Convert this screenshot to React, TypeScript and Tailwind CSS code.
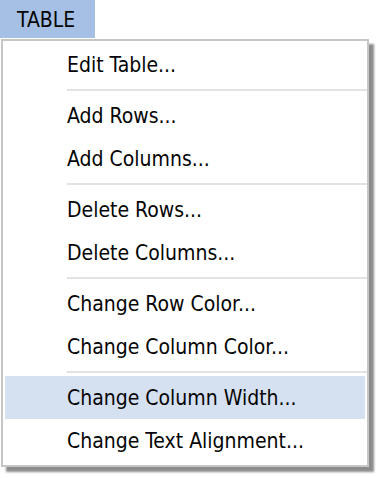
// App.tsx
// ─── TABLE MENU ─────────────────────────────────────────────

type Entry = { label: string; active?: boolean } | "sep";

const ENTRIES: Entry[] = [
  { label: "Edit Table..." },
  "sep",
  { label: "Add Rows..." },
  { label: "Add Columns..." },
  "sep",
  { label: "Delete Rows..." },
  { label: "Delete Columns..." },
  "sep",
  { label: "Change Row Color..." },
  { label: "Change Column Color..." },
  "sep",
  { label: "Change Column Width...", active: true },
  { label: "Change Text Alignment..." },
];

export default function App() {
  return (
    <div
      className="w-[382px] h-[478px] bg-white text-[21px] text-[#050505]"
      style={{ fontFamily: '"DejaVu Sans Condensed", "Liberation Sans", sans-serif' }}
    >
      {/* Menu bar button */}
      <div className="w-[95px] h-[38px] bg-[#a6bfe4] pl-[17px] flex items-center pt-[3px] leading-none">
        TABLE
      </div>

      {/* Dropdown */}
      <div className="ml-px mt-px w-[368px] border-2 border-[#c6c6c6] bg-white pt-[2px] pb-[3px] shadow-[5px_5px_2px_rgba(0,0,0,0.45)]">
        {ENTRIES.map((e, i) =>
          e === "sep" ? (
            <div key={i} className="h-[8px] pt-[3px] pl-[64px]">
              <div className="h-[2px] bg-[#e1e1e6]" />
            </div>
          ) : (
            <div
              key={i}
              className={`h-[43px] mx-[2px] pl-[62px] flex items-center leading-none pt-[2px] ${
                e.active ? "bg-[#d5e0f1]" : ""
              }`}
            >
              {e.label}
            </div>
          )
        )}
      </div>
    </div>
  );
}
